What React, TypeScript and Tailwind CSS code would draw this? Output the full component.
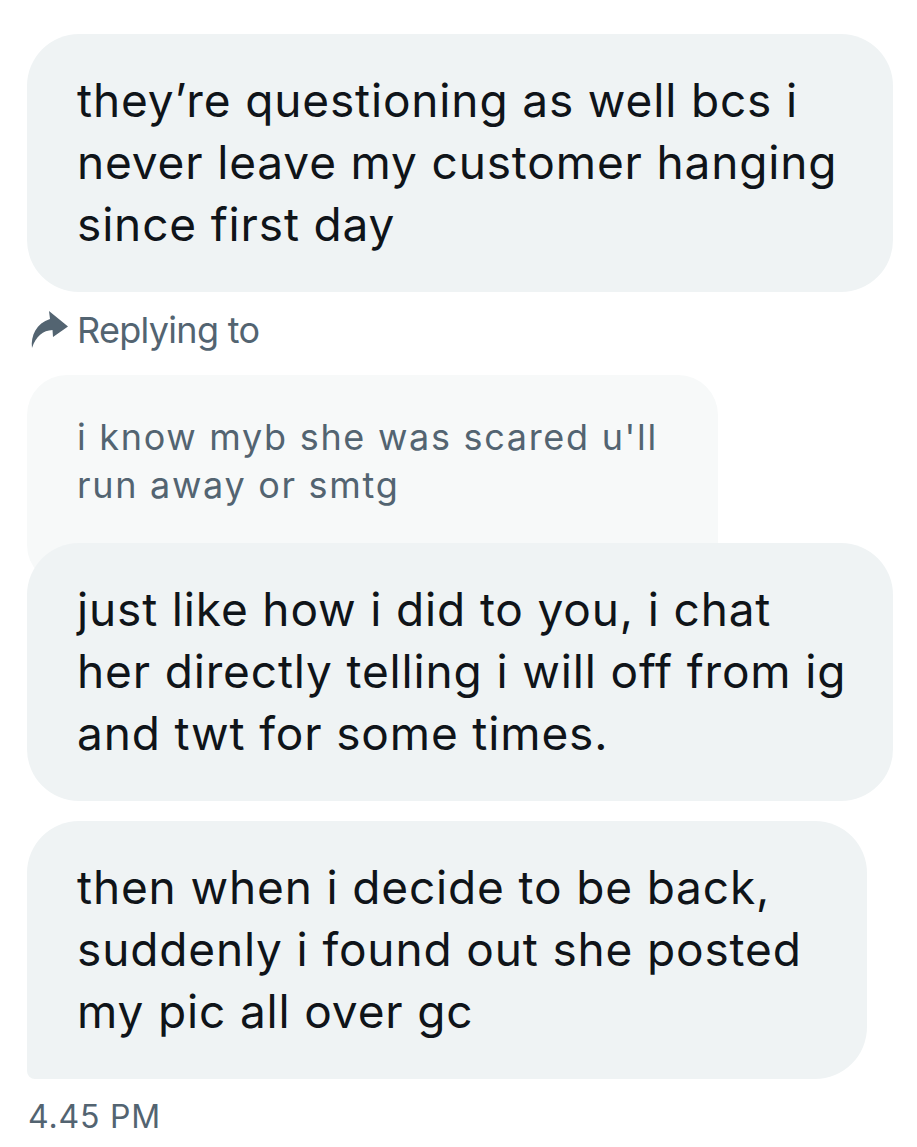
function ReplyArrow() {
  return (
    <svg width="40" height="40" viewBox="0 0 40 40" className="shrink-0">
      <path
        d="M20 1 L39 16.5 L24 27 L23.5 20 C14 20.5 7 26 3 38 C1.5 26 7.5 13 21 9 Z"
        fill="#536471"
      />
    </svg>
  );
}

const font = { fontFamily: "Inter, 'Liberation Sans', sans-serif" };

function Bubble({ lines, width, tail }: { lines: string[]; width: string; tail?: boolean }) {
  return (
    <div
      className={`relative z-10 bg-[#eff3f4] ${width} ${tail ? "rounded-[52px] rounded-bl-[8px]" : "rounded-[52px]"} pl-[50px] pr-6 pt-[35px] pb-[37px]`}
    >
      {lines.map((l) => (
        <div key={l} className="text-[46px] leading-[62px] text-[#0f1419] whitespace-nowrap tracking-[0.85px]">
          {l}
        </div>
      ))}
    </div>
  );
}

export default function App() {
  return (
    <div className="w-[917px] h-[1147px] bg-white pl-[27px] pt-[34px] overflow-hidden" style={font}>
      <Bubble
        width="w-[866px]"
        lines={["they’re questioning as well bcs i", "never leave my customer hanging", "since first day"]}
      />

      <div className="flex items-center gap-2 mt-[18px] pl-[2px] h-[40px]">
        <ReplyArrow />
        <span className="text-[36px] leading-[40px] text-[#536471] tracking-[-0.7px]">Replying to</span>
      </div>

      <div className="mt-[25px] w-[691px] h-[210px] bg-[#f7f9f9] rounded-[40px] pl-[50px] pt-[38px]">
        <div className="text-[36px] leading-[48px] text-[#536471] tracking-[1.7px] whitespace-nowrap">i know myb she was scared u'll</div>
        <div className="text-[36px] leading-[48px] text-[#536471] tracking-[1.7px] whitespace-nowrap">run away or smtg</div>
      </div>

      <div className="-mt-[42px]">
        <Bubble
          width="w-[866px]"
          lines={["just like how i did to you, i chat", "her directly telling i will off from ig", "and twt for some times."]}
        />
      </div>

      <div className="mt-[20px]">
        <Bubble
          width="w-[840px]"
          tail
          lines={["then when i decide to be back,", "suddenly i found out she posted", "my pic all over gc"]}
        />
      </div>

      <div className="mt-[18px] pl-[1px] text-[32px] leading-[40px] text-[#536471] tracking-[0.8px]">4.45 PM</div>
    </div>
  );
}
